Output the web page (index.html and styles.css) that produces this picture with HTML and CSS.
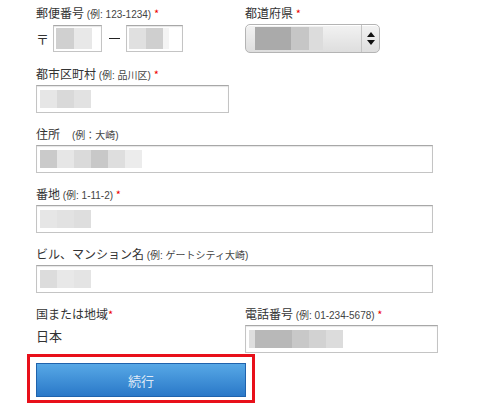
FILE: index.html
```html
<!DOCTYPE html>
<html lang="ja">
  <head>
    <meta charset="UTF-8" />
    <meta name="viewport" content="width=device-width, initial-scale=1.0" />
    <title>住所入力</title>
    <link rel="stylesheet" href="styles.css">
  </head>
  <body>
    <form class="address">
      <div class="cols">
        <div class="field">
          <label>郵便番号 <small>(例: 123-1234)</small> <em>*</em></label>
          <div class="zip">
            <span class="mark">〒</span>
            <div class="input zip1">
              <span class="mosaic"><i style="background:#d0d0d0"></i><i style="background:#e8e8e8"></i></span>
            </div>
            <span class="dash"></span>
            <div class="input zip2">
              <span class="mosaic"><i style="background:#e0e0e0"></i><i style="background:#cfcfcf"></i><i style="background:#f4f4f4;width:6px"></i></span>
            </div>
          </div>
        </div>
        <div class="field">
          <label>都道府県 <em>*</em></label>
          <div class="select">
            <span class="mosaic tall"><i style="background:#aaa;width:36px"></i><i style="background:#c6c6c6;width:18px"></i><i style="background:#dcdcdc;width:14px"></i></span>
            <span class="arrows">
              <svg width="8" height="13" viewBox="0 0 8 13"><path d="M4 0 L8 5 L0 5 Z M0 8 L8 8 L4 13 Z" fill="#111"/></svg>
            </span>
          </div>
        </div>
      </div>

      <div class="field">
        <label>都市区町村 <small>(例: 品川区)</small> <em>*</em></label>
        <div class="input half">
          <span class="mosaic"><i style="background:#e6e6e6"></i><i style="background:#d9d9d9"></i><i style="background:#e2e2e2"></i></span>
        </div>
      </div>

      <div class="field">
        <label>住所　<small>(例：大崎)</small></label>
        <div class="input full">
          <span class="mosaic"><i style="background:#cacaca"></i><i style="background:#e6e6e6"></i><i style="background:#dadada"></i><i style="background:#c8c8c8"></i><i style="background:#dedede"></i><i style="background:#ececec"></i></span>
        </div>
      </div>

      <div class="field">
        <label>番地 <small>(例: 1-11-2)</small> <em>*</em></label>
        <div class="input full">
          <span class="mosaic"><i style="background:#e6e6e6"></i><i style="background:#e2e2e2"></i><i style="background:#dedede"></i></span>
        </div>
      </div>

      <div class="field">
        <label>ビル、マンション名 <small>(例: ゲートシティ大崎)</small></label>
        <div class="input full">
          <span class="mosaic"><i style="background:#dcdcdc"></i><i style="background:#e8e8e8"></i><i style="background:#e4e4e4"></i></span>
        </div>
      </div>

      <div class="cols">
        <div class="field">
          <label>国または地域<em>*</em></label>
          <p class="value">日本</p>
        </div>
        <div class="field">
          <label>電話番号 <small>(例: 01-234-5678)</small> <em>*</em></label>
          <div class="input half">
            <span class="mosaic"><i style="background:#dedede;width:6px"></i><i style="background:#b8b8b8;width:37px"></i><i style="background:#c8c8c8"></i><i style="background:#d2d2d2"></i><i style="background:#dcdcdc"></i></span>
          </div>
        </div>
      </div>

      <div class="submit">
        <button type="button">続行</button>
      </div>
    </form>
  </body>
</html>
```

FILE: styles.css
```css
* {
  margin: 0;
  padding: 0;
  box-sizing: border-box;
}
body {
  font-family: "Noto Sans CJK JP", "Liberation Sans", sans-serif;
  color: #333;
  background: #fff;
}
.address {
  padding: 5px 0 0 36px;
}
.cols {
  display: grid;
  grid-template-columns: 209px 1fr;
}
.field {
  margin-bottom: 13px;
}
.field label {
  display: block;
  height: 16px;
  margin-bottom: 3px;
  font-size: 12px;
  line-height: 16px;
}
.field small {
  font-family: "Liberation Sans", "Noto Sans CJK JP", sans-serif;
  font-size: 10px;
  color: #444;
}
.field em {
  font-style: normal;
  font-size: 11px;
  color: #e00;
}

/* 入力欄 */
.input {
  display: flex;
  align-items: center;
  height: 28px;
  padding: 0 3px;
  border: 1px solid #c4c4c4;
  border-top-color: #a8a8a8;
  box-shadow: inset 0 1px 1px rgba(0, 0, 0, 0.1);
  background: #fff;
}
.half {
  width: 193px;
}
.full {
  width: 397px;
}
.mosaic {
  display: flex;
  height: 18px;
}
.mosaic.tall {
  height: 23px;
}
.mosaic i {
  display: block;
  width: 17px;
}

/* 郵便番号 */
.zip {
  display: flex;
  align-items: center;
  height: 29px;
}
.zip .mark {
  width: 17px;
  font-size: 13px;
}
.zip .input {
  height: 27px;
  padding: 0 2px;
}
.zip1 {
  width: 49px;
}
.zip1 .mosaic i {
  width: 18px;
}
.zip2 {
  width: 57px;
}
.zip .mosaic {
  height: 21px;
}
.zip .dash {
  width: 11px;
  height: 1px;
  margin: 0 6px 0 7px;
  background: #222;
}

/* 都道府県 */
.select {
  position: relative;
  display: flex;
  align-items: center;
  width: 135px;
  height: 29px;
  padding-left: 9px;
  border: 1px solid #b4b4b4;
  border-radius: 5px;
  background: linear-gradient(#f2f2f2, #dedede);
  box-shadow: inset 0 1px 0 #fff;
}
.select .arrows {
  position: absolute;
  top: 0;
  right: 0;
  display: flex;
  align-items: center;
  justify-content: center;
  width: 18px;
  height: 27px;
  border-left: 1px solid #c4c4c4;
}

.value {
  font-size: 13px;
  line-height: 16px;
  padding-top: 3px;
}

/* 続行ボタン */
.submit {
  width: 228px;
  margin: -12px 0 0 -9px;
  padding: 6px 6px 3px;
  border: 3px solid #e8101a;
}
.submit button {
  display: block;
  width: 210px;
  height: 34px;
  border: 1px solid #1f63ad;
  background: linear-gradient(#57a8e6, #2a78c8);
  font-family: "Noto Sans CJK JP", sans-serif;
  font-size: 13px;
  color: #dfe9f6;
}
```
